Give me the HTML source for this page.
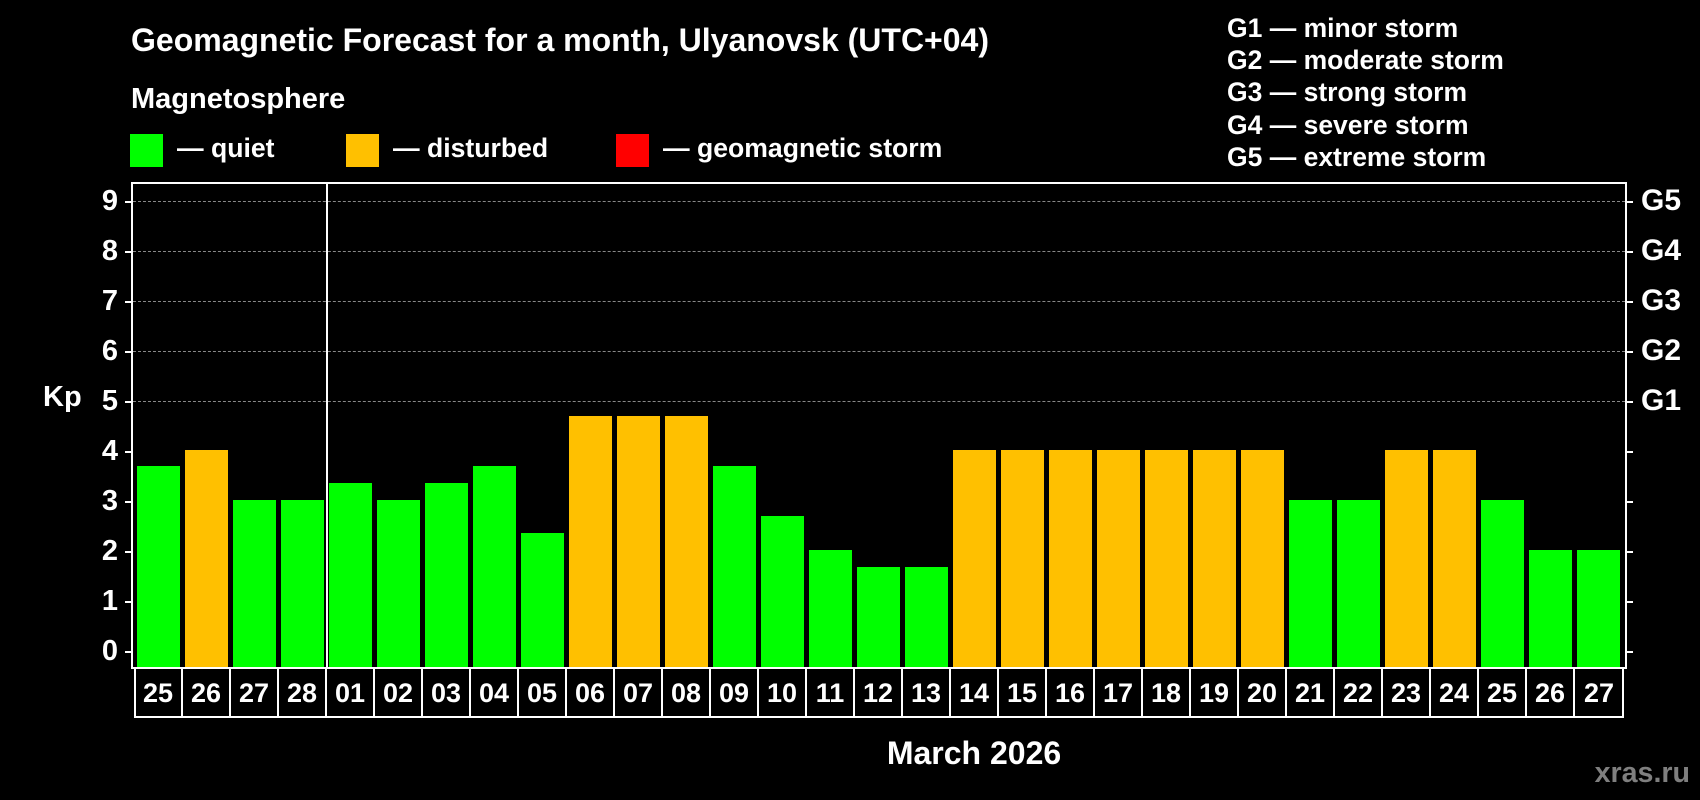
<!DOCTYPE html>
<html><head><meta charset="utf-8"><style>
*{margin:0;padding:0;box-sizing:border-box}
body{width:1700px;height:800px;background:#000;position:relative;overflow:hidden;font-family:"Liberation Sans",Arial,sans-serif;font-weight:bold;color:#fff}
.a{position:absolute;white-space:nowrap}
.bar{position:absolute;width:43px;bottom:133px}
.g{background:#00ff00}.o{background:#ffc000}
.grid{position:absolute;left:133px;width:1492px;border-top:1px dashed #888;height:0}
.yl{position:absolute;width:44px;left:74px;text-align:right;font-size:29px;line-height:30px}
.tk{position:absolute;height:2px;background:#fff;width:7px}
.cell{position:absolute;top:669px;height:48px;width:48px;border-right:2px solid #fff;text-align:center;font-size:27px;line-height:48px}
.gl{position:absolute;left:1641px;font-size:30px;line-height:30px}
</style></head><body>
<div class="a" style="left:131px;top:22px;font-size:32px;line-height:37px">Geomagnetic Forecast for a month, Ulyanovsk (UTC+04)</div>
<div class="a" style="left:131px;top:83px;font-size:29px;line-height:33px">Magnetosphere</div>
<div class="a g" style="left:130px;top:134px;width:33px;height:33px"></div>
<div class="a" style="left:177px;top:133px;font-size:26.6px">— quiet</div>
<div class="a o" style="left:346px;top:134px;width:33px;height:33px"></div>
<div class="a" style="left:393px;top:133px;font-size:26.6px">— disturbed</div>
<div class="a" style="left:616px;top:134px;width:33px;height:33px;background:#ff0000"></div>
<div class="a" style="left:663px;top:133px;font-size:26.6px">— geomagnetic storm</div>
<div class="a" style="left:1227px;top:12px;font-size:26.5px;line-height:32.2px">G1 — minor storm<br>G2 — moderate storm<br>G3 — strong storm<br>G4 — severe storm<br>G5 — extreme storm</div>

<div class="grid" style="top:201px"></div><div class="grid" style="top:251px"></div><div class="grid" style="top:301px"></div><div class="grid" style="top:351px"></div><div class="grid" style="top:401px"></div>

<div class="yl" style="top:186px">9</div><div class="yl" style="top:236px">8</div><div class="yl" style="top:286px">7</div><div class="yl" style="top:336px">6</div><div class="yl" style="top:386px">5</div><div class="yl" style="top:436px">4</div><div class="yl" style="top:486px">3</div><div class="yl" style="top:536px">2</div><div class="yl" style="top:586px">1</div><div class="yl" style="top:636px">0</div>
<div class="a" style="left:43px;top:381px;font-size:29px">Kp</div>
<div class="gl" style="top:186px">G5</div>
<div class="gl" style="top:236px">G4</div>
<div class="gl" style="top:286px">G3</div>
<div class="gl" style="top:336px">G2</div>
<div class="gl" style="top:386px">G1</div>

<div class="tk" style="left:125px;top:201px"></div><div class="tk" style="left:125px;top:251px"></div><div class="tk" style="left:125px;top:301px"></div><div class="tk" style="left:125px;top:351px"></div><div class="tk" style="left:125px;top:401px"></div><div class="tk" style="left:125px;top:451px"></div><div class="tk" style="left:125px;top:501px"></div><div class="tk" style="left:125px;top:551px"></div><div class="tk" style="left:125px;top:601px"></div><div class="tk" style="left:125px;top:651px"></div>
<div class="tk" style="left:1626px;top:201px"></div><div class="tk" style="left:1626px;top:251px"></div><div class="tk" style="left:1626px;top:301px"></div><div class="tk" style="left:1626px;top:351px"></div><div class="tk" style="left:1626px;top:401px"></div><div class="tk" style="left:1626px;top:451px"></div><div class="tk" style="left:1626px;top:501px"></div><div class="tk" style="left:1626px;top:551px"></div><div class="tk" style="left:1626px;top:601px"></div><div class="tk" style="left:1626px;top:651px"></div>

<div class="bar g" style="left:137px;height:201px"></div>
<div class="bar o" style="left:185px;height:217px"></div>
<div class="bar g" style="left:233px;height:167px"></div>
<div class="bar g" style="left:281px;height:167px"></div>
<div class="bar g" style="left:329px;height:184px"></div>
<div class="bar g" style="left:377px;height:167px"></div>
<div class="bar g" style="left:425px;height:184px"></div>
<div class="bar g" style="left:473px;height:201px"></div>
<div class="bar g" style="left:521px;height:134px"></div>
<div class="bar o" style="left:569px;height:251px"></div>
<div class="bar o" style="left:617px;height:251px"></div>
<div class="bar o" style="left:665px;height:251px"></div>
<div class="bar g" style="left:713px;height:201px"></div>
<div class="bar g" style="left:761px;height:151px"></div>
<div class="bar g" style="left:809px;height:117px"></div>
<div class="bar g" style="left:857px;height:100px"></div>
<div class="bar g" style="left:905px;height:100px"></div>
<div class="bar o" style="left:953px;height:217px"></div>
<div class="bar o" style="left:1001px;height:217px"></div>
<div class="bar o" style="left:1049px;height:217px"></div>
<div class="bar o" style="left:1097px;height:217px"></div>
<div class="bar o" style="left:1145px;height:217px"></div>
<div class="bar o" style="left:1193px;height:217px"></div>
<div class="bar o" style="left:1241px;height:217px"></div>
<div class="bar g" style="left:1289px;height:167px"></div>
<div class="bar g" style="left:1337px;height:167px"></div>
<div class="bar o" style="left:1385px;height:217px"></div>
<div class="bar o" style="left:1433px;height:217px"></div>
<div class="bar g" style="left:1481px;height:167px"></div>
<div class="bar g" style="left:1529px;height:117px"></div>
<div class="bar g" style="left:1577px;height:117px"></div>

<div class="a" style="left:131px;top:182px;width:1496px;height:487px;border:2px solid #fff"></div>
<div class="a" style="left:326px;top:183px;width:2px;height:485px;background:#fff"></div>

<div class="a" style="left:134px;top:667px;width:1490px;height:51px;border:2px solid #fff;border-top:none"></div>
<div class="cell" style="left:135px">25</div><div class="cell" style="left:183px">26</div><div class="cell" style="left:231px">27</div><div class="cell" style="left:279px">28</div><div class="cell" style="left:327px">01</div><div class="cell" style="left:375px">02</div><div class="cell" style="left:423px">03</div><div class="cell" style="left:471px">04</div><div class="cell" style="left:519px">05</div><div class="cell" style="left:567px">06</div><div class="cell" style="left:615px">07</div><div class="cell" style="left:663px">08</div><div class="cell" style="left:711px">09</div><div class="cell" style="left:759px">10</div><div class="cell" style="left:807px">11</div><div class="cell" style="left:855px">12</div><div class="cell" style="left:903px">13</div><div class="cell" style="left:951px">14</div><div class="cell" style="left:999px">15</div><div class="cell" style="left:1047px">16</div><div class="cell" style="left:1095px">17</div><div class="cell" style="left:1143px">18</div><div class="cell" style="left:1191px">19</div><div class="cell" style="left:1239px">20</div><div class="cell" style="left:1287px">21</div><div class="cell" style="left:1335px">22</div><div class="cell" style="left:1383px">23</div><div class="cell" style="left:1431px">24</div><div class="cell" style="left:1479px">25</div><div class="cell" style="left:1527px">26</div><div class="cell" style="left:1575px;border-right:none">27</div>

<div class="a" style="left:824px;top:735px;width:300px;text-align:center;font-size:32px;line-height:37px">March 2026</div>
<div class="a" style="right:10px;top:757px;font-size:28.6px;line-height:33px;color:#7f7f7f">xras.ru</div>
</body></html>
